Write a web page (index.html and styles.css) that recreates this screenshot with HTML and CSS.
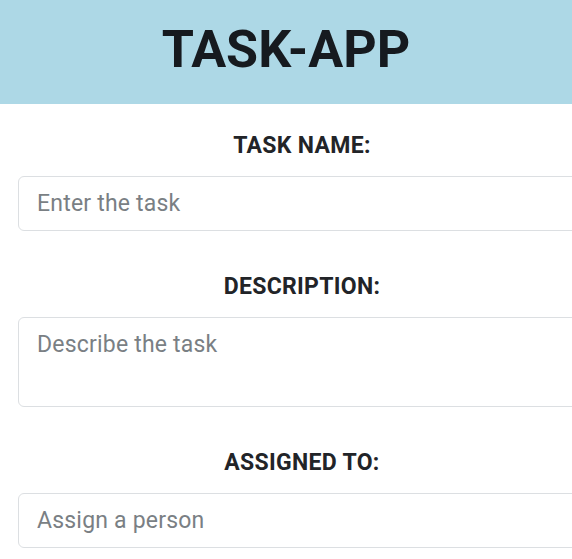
FILE: index.html
```html
<!DOCTYPE html>
<html lang="en">
<head>
<meta charset="utf-8">
<title>TASK-APP</title>
<link rel="stylesheet" href="styles.css">
</head>
<body>
<header class="app-header">
  <h1 class="app-title">TASK-APP</h1>
</header>
<form class="task-form">
  <div class="field">
    <label class="field-label" for="task">TASK NAME:</label>
    <input class="field-input" id="task" type="text" placeholder="Enter the task">
  </div>
  <div class="field">
    <label class="field-label" for="desc">DESCRIPTION:</label>
    <textarea class="field-input field-area" id="desc" placeholder="Describe the task"></textarea>
  </div>
  <div class="field">
    <label class="field-label" for="person">ASSIGNED TO:</label>
    <input class="field-input" id="person" type="text" placeholder="Assign a person">
  </div>
</form>
</body>
</html>
```

FILE: styles.css
```css
html, body {
  margin: 0;
  padding: 0;
  overflow: hidden;
  background: #ffffff;
}
body {
  font-family: Roboto, "Noto Sans", sans-serif;
  color: #212529;
}
.app-header {
  background: #add8e6;
  height: 104px;
  display: flex;
  align-items: center;
  justify-content: center;
}
.app-title {
  margin: 0;
  font-family: Roboto, sans-serif;
  font-weight: 700;
  font-size: 52px;
  line-height: 1;
  color: #161a1f;
  padding-bottom: 5px;
}
.task-form {
  margin-left: 18px;
  width: 568px;
  padding-top: 29px;
  display: flex;
  flex-direction: column;
  gap: 43px;
}
.field {
  display: flex;
  flex-direction: column;
}
.field-label {
  display: block;
  text-align: center;
  font-weight: 700;
  font-size: 23px;
  letter-spacing: 0.3px;
  line-height: 26px;
  color: #222428;
  margin-bottom: 17px;
}
.field-input {
  box-sizing: border-box;
  height: 55px;
  width: 100%;
  margin: 0;
  border: 1.5px solid #dcdfe2;
  border-radius: 6px;
  padding: 0 18px;
  font-family: Roboto, sans-serif;
  font-size: 23px;
  letter-spacing: 0.2px;
  color: #495057;
  background: #ffffff;
  outline: none;
}
.field-input::placeholder {
  color: #7a7f84;
}
.field-area {
  height: 90px;
  padding-top: 13px;
  resize: none;
  line-height: 1.25;
}
```
